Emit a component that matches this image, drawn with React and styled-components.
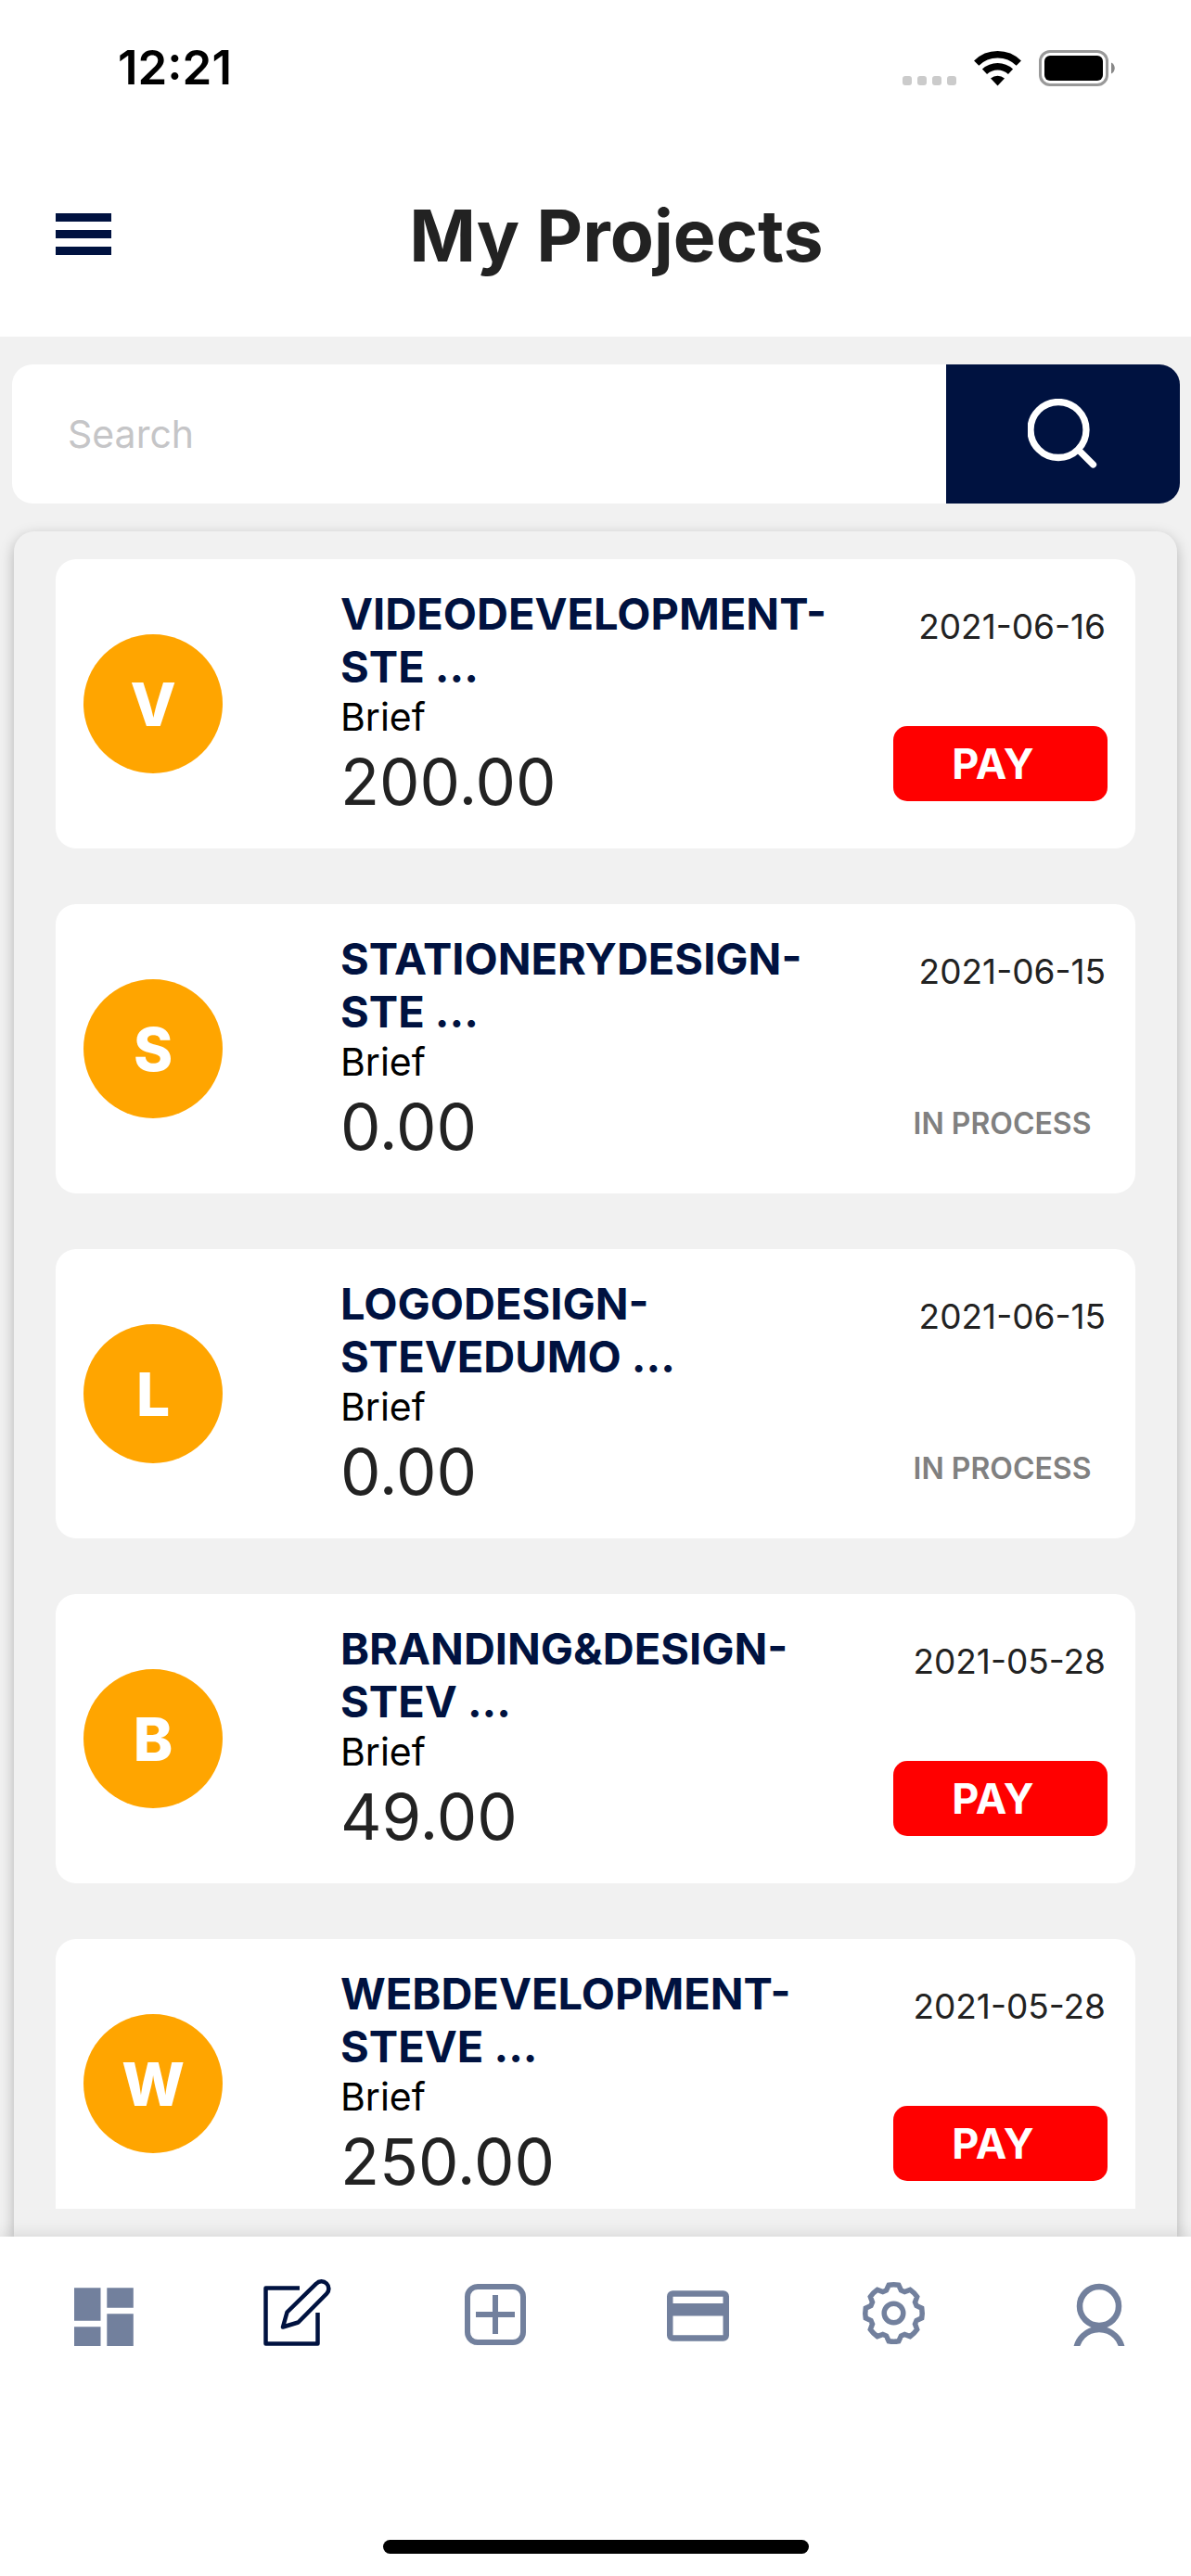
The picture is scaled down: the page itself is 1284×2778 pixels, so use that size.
import React from "react";
import styled, { createGlobalStyle } from "styled-components";

const NAVY = "#001240";
const SLATE = "#72809d";
const INK = "#222222";

const GlobalStyle = createGlobalStyle`
  *, *::before, *::after { box-sizing: border-box; }
  body {
    margin: 0;
    background: #ffffff;
    color: ${INK};
    font-family: Inter, "Liberation Sans", sans-serif;
  }
  button, input { font-family: inherit; }
`;

const Screen = styled.div`
  display: flex;
  flex-direction: column;
  height: 100vh;
  background: #f1f1f1;
`;

const StatusBar = styled.div`
  display: flex;
  align-items: center;
  justify-content: space-between;
  padding: 48px 82px 48px 127px;
  background: #ffffff;
`;

const Clock = styled.time`
  font-size: 51px;
  line-height: 50px;
  font-weight: 600;
  color: #000000;
`;

const StatusIcons = styled.div`
  display: flex;
  align-items: center;
  gap: 19px;

  svg { display: block; }
`;

const Header = styled.header`
  display: flex;
  align-items: center;
  padding: 58px 75px 59px 60px;
  background: #ffffff;
`;

const MenuButton = styled.button`
  display: flex;
  flex-direction: column;
  gap: 9px;
  width: 60px;
  padding: 0 0 4px;
  border: 0;
  background: none;
`;

const MenuBar = styled.span`
  height: 9px;
  background: ${NAVY};
`;

const PageTitle = styled.h1`
  flex: 1;
  margin: 0;
  text-align: center;
  font-size: 77px;
  line-height: 100px;
  font-weight: 700;
`;

const SearchForm = styled.form`
  display: flex;
  height: 150px;
  margin: 30px 12px 30px 13px;
  border-radius: 22px;
  overflow: hidden;
  flex-shrink: 0;
`;

const SearchInput = styled.input`
  flex: 1;
  min-width: 0;
  padding: 0 60px;
  border: 0;
  border-radius: 0;
  outline: 0;
  background: #ffffff;
  font-size: 41px;
  color: ${INK};

  &::placeholder { color: #c5c5c7; opacity: 1; }
`;

const SearchButton = styled.button`
  display: flex;
  align-items: center;
  justify-content: center;
  width: 252px;
  padding: 0;
  border: 0;
  background: ${NAVY};
`;

const Panel = styled.main`
  display: flex;
  flex: 1;
  min-height: 0;
  margin: 0 15px;
  padding: 30px 45px;
  border-radius: 22px 22px 0 0;
  background: #f1f1f1;
  box-shadow: 0 5px 15px rgba(0, 0, 0, 0.26);
`;

const ProjectList = styled.ul`
  display: flex;
  flex: 1;
  flex-direction: column;
  gap: 60px;
  margin: 0;
  padding: 0;
  list-style: none;
  overflow-y: auto;
  scrollbar-width: none;
`;

const Card = styled.li`
  display: grid;
  grid-template-columns: 150px 1fr 231px;
  flex-shrink: 0;
  padding: 30px 30px 28px;
  border-radius: 22px;
  background: #ffffff;
`;

const Avatar = styled.div`
  display: flex;
  align-items: center;
  justify-content: center;
  align-self: center;
  width: 150px;
  height: 150px;
  margin-bottom: 2px;
  border-radius: 50%;
  background: #ffa500;
  color: #ffffff;
  font-size: 64px;
  font-weight: 800;
`;

const Details = styled.div`
  padding: 0 30px 0 127px;
`;

const ProjectName = styled.h2`
  margin: 0;
  font-size: 47px;
  line-height: 57px;
  font-weight: 700;
  color: ${NAVY};
`;

const Stage = styled.p`
  margin: 0;
  font-size: 41px;
  line-height: 52px;
  color: #000000;
`;

const Amount = styled.p`
  margin: 0;
  font-size: 69px;
  line-height: 88px;
`;

const Meta = styled.div`
  display: flex;
  flex-direction: column;
  padding-top: 21px;
`;

const ProjectDate = styled.time`
  padding-right: 2px;
  text-align: right;
  font-size: 37px;
  line-height: 44px;
`;

const PayButton = styled.button`
  margin-top: 85px;
  height: 81px;
  padding: 0 16px 0 0;
  border: 0;
  border-radius: 15px;
  background: #ff0000;
  color: #ffffff;
  font-size: 45px;
  font-weight: 700;
`;

const InProcess = styled.p`
  margin: 122px 0 0;
  padding-left: 4px;
  text-align: center;
  font-size: 32px;
  line-height: 40px;
  font-weight: 600;
  color: #808080;
`;

const Footer = styled.footer`
  position: relative;
  display: flex;
  flex-direction: column;
  align-items: center;
  gap: 209px;
  padding: 46px 0 24px;
  background: #ffffff;
  box-shadow: 0 0 18px rgba(0, 0, 0, 0.14);
`;

const TabBar = styled.nav`
  display: grid;
  grid-template-columns: repeat(6, 1fr);
  width: 100%;
`;

const Tab = styled.a`
  display: flex;
  justify-content: center;
  color: ${(p) => (p.$active ? NAVY : SLATE)};

  svg { display: block; }
`;

const HomeIndicator = styled.div`
  width: 459px;
  height: 15px;
  border-radius: 8px;
  background: #000000;
`;

const TabIcon = ({ children }) => (
  <svg width="80" height="72" viewBox="0 0 80 72" fill="none" stroke="currentColor" aria-hidden="true">
    {children}
  </svg>
);

// Outline of a cog with eight teeth around (cx, cy)
function cogPath(cx, cy, tip, root) {
  const at = (r, deg) => {
    const a = ((deg - 90) * Math.PI) / 180;
    return `${(cx + r * Math.cos(a)).toFixed(2)} ${(cy + r * Math.sin(a)).toFixed(2)}`;
  };
  let d = "";
  for (let i = 0; i < 8; i++) {
    const c = i * 45;
    d += `${i ? "L" : "M"}${at(root, c - 18)}L${at(tip, c - 10)}A${tip} ${tip} 0 0 1 ${at(tip, c + 10)}L${at(root, c + 18)}`;
  }
  return d + "Z";
}

const tabs = [
  {
    label: "Dashboard",
    icon: (
      <path
        fill="currentColor"
        stroke="none"
        d="M13 9.200h28.500v35.500H13zM48.300 9.200H76.800v21.500H48.300zM13 51.200h28.500V72H13zM48.300 37.200H76.800V72H48.300z"
      />
    ),
  },
  {
    label: "Projects",
    active: true,
    icon: (
      <g strokeWidth="4.500">
        <path strokeLinejoin="round" d="M42 9.500H5.500v60h56V36" />
        <path strokeLinejoin="round" d="M24 51.500l4.500-16L60 4.700a7.700 7.700 0 0 1 11.200 10.800L40.500 46.500z" />
      </g>
    ),
  },
  {
    label: "New project",
    icon: (
      <g>
        <rect x="9" y="8" width="60" height="60" rx="11" strokeWidth="6" />
        <path strokeWidth="6" d="M18 38h42M39 17v42" />
      </g>
    ),
  },
  {
    label: "Payments",
    icon: (
      <g>
        <rect x="13.250" y="15.500" width="60.500" height="48" rx="3" strokeWidth="6.500" />
        <path strokeWidth="13.500" d="M13 32.750h61" />
      </g>
    ),
  },
  {
    label: "Settings",
    icon: (
      <g strokeWidth="5.500">
        <path d={cogPath(40.5, 36.5, 30.7, 25.8)} />
        <circle cx="40.500" cy="36.500" r="10.300" />
      </g>
    ),
  },
  {
    label: "Profile",
    icon: (
      <g strokeWidth="6.500">
        <circle cx="48" cy="29" r="21" />
        <circle cx="48" cy="79" r="25" />
      </g>
    ),
  },
];

const projects = [
  { name: "VIDEODEVELOPMENT-STE ...", amount: "200.00", date: "2021-06-16", due: true },
  { name: "STATIONERYDESIGN-STE ...", amount: "0.00", date: "2021-06-15", due: false },
  { name: "LOGODESIGN-STEVEDUMO ...", amount: "0.00", date: "2021-06-15", due: false },
  { name: "BRANDING&DESIGN-STEV ...", amount: "49.00", date: "2021-05-28", due: true },
  { name: "WEBDEVELOPMENT-STEVE ...", amount: "250.00", date: "2021-05-28", due: true },
];

export default function App() {
  return (
    <>
      <GlobalStyle />
      <Screen>
        <StatusBar>
          <Clock>12:21</Clock>
          <StatusIcons>
            <svg width="58" height="39" viewBox="0 0 58 39" fill="#cbcbcb" aria-hidden="true">
              <rect x="0" y="28" width="10" height="10" rx="3" />
              <rect x="16" y="28" width="10" height="10" rx="3" />
              <rect x="32" y="28" width="10" height="10" rx="3" />
              <rect x="48" y="28" width="10" height="10" rx="3" />
            </svg>
            <svg width="51" height="39" viewBox="0 0 51 39" fill="none" stroke="#000000" aria-hidden="true">
              <path strokeWidth="7.500" d="M2.700 14.200a32.500 32.500 0 0 1 45.600 0" />
              <path strokeWidth="7.500" d="M11.500 23.200a20.500 20.500 0 0 1 28 0" />
              <path fill="#000000" stroke="none" d="M25.500 38.500l-7.500-8a11.500 11.500 0 0 1 15 0z" />
            </svg>
            <svg width="82" height="39" viewBox="0 0 82 39" aria-hidden="true">
              <rect x="1.500" y="1.500" width="72" height="36" rx="10.500" fill="none" stroke="#999999" strokeWidth="3" />
              <rect x="6" y="6" width="63" height="27" rx="6" fill="#000000" />
              <path d="M78 13.500c5 2 5 10 0 12z" fill="#888888" />
            </svg>
          </StatusIcons>
        </StatusBar>

        <Header>
          <MenuButton type="button" aria-label="Open menu">
            <MenuBar />
            <MenuBar />
            <MenuBar />
          </MenuButton>
          <PageTitle>My Projects</PageTitle>
        </Header>

        <SearchForm role="search" onSubmit={(e) => e.preventDefault()}>
          <SearchInput type="text" placeholder="Search" aria-label="Search" />
          <SearchButton type="submit" aria-label="Search projects">
            <svg width="76" height="76" viewBox="0 0 76 76" fill="none" stroke="#ffffff" strokeWidth="7.300" strokeLinecap="round">
              <circle cx="33" cy="33.500" r="30" />
              <path d="M55 55.500l15.500 15.500" />
            </svg>
          </SearchButton>
        </SearchForm>

        <Panel>
          <ProjectList>
            {projects.map((p) => (
              <Card key={p.name}>
                <Avatar aria-hidden="true">{p.name[0]}</Avatar>
                <Details>
                  <ProjectName>{p.name}</ProjectName>
                  <Stage>Brief</Stage>
                  <Amount>{p.amount}</Amount>
                </Details>
                <Meta>
                  <ProjectDate dateTime={p.date}>{p.date}</ProjectDate>
                  {p.due ? <PayButton type="button">PAY</PayButton> : <InProcess>IN PROCESS</InProcess>}
                </Meta>
              </Card>
            ))}
          </ProjectList>
        </Panel>

        <Footer>
          <TabBar aria-label="Main">
            {tabs.map((t) => (
              <Tab
                key={t.label}
                href="#"
                aria-label={t.label}
                aria-current={t.active ? "page" : undefined}
                $active={t.active}
              >
                <TabIcon>{t.icon}</TabIcon>
              </Tab>
            ))}
          </TabBar>
          <HomeIndicator />
        </Footer>
      </Screen>
    </>
  );
}
